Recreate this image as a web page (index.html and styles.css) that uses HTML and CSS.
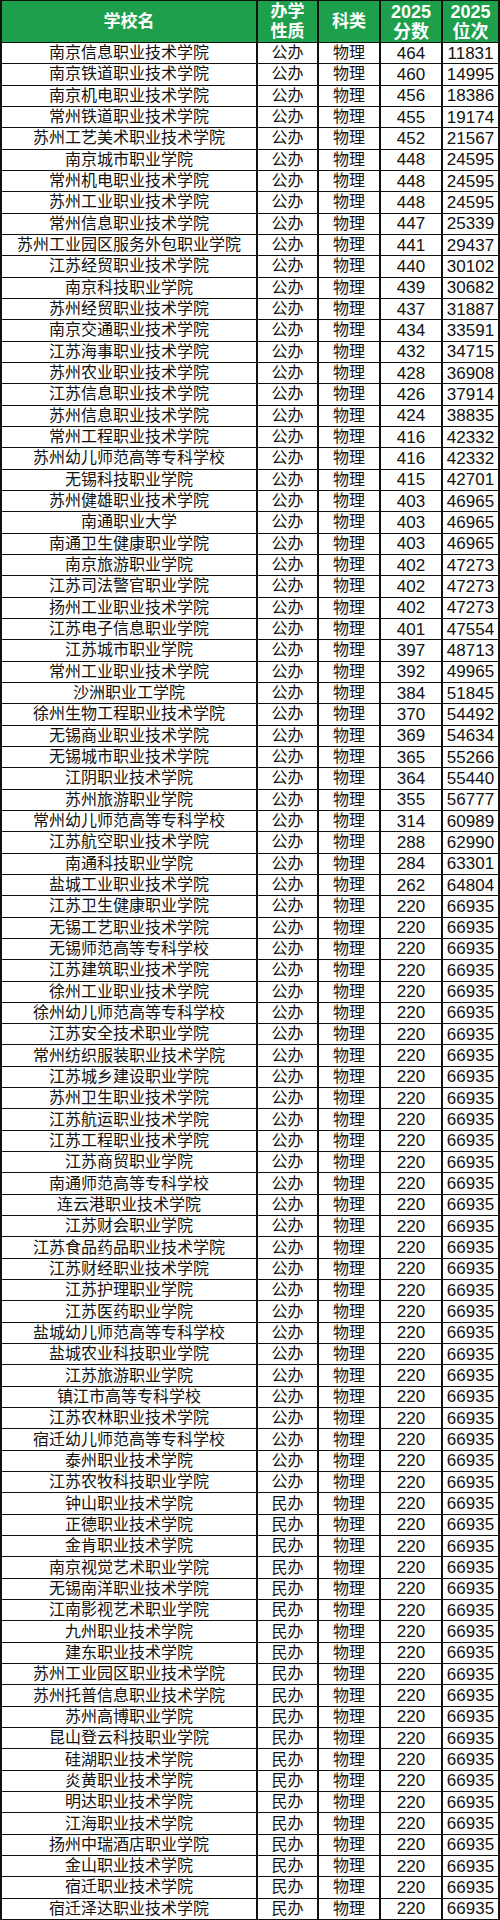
FILE: index.html
```html
<!DOCTYPE html>
<html lang="zh-CN">
<head>
<meta charset="utf-8">
<title>2025 江苏专科院校物理类分数位次</title>
<link rel="stylesheet" href="styles.css">
</head>
<body>
<div class="tbl">
<div class="h">学校名</div><div class="h">办学<br>性质</div><div class="h">科类</div><div class="h n">2025<br>分数</div><div class="h n">2025<br>位次</div>
<div>南京信息职业技术学院</div><div>公办</div><div>物理</div><div class="n">464</div><div class="n">11831</div>
<div>南京铁道职业技术学院</div><div>公办</div><div>物理</div><div class="n">460</div><div class="n">14995</div>
<div>南京机电职业技术学院</div><div>公办</div><div>物理</div><div class="n">456</div><div class="n">18386</div>
<div>常州铁道职业技术学院</div><div>公办</div><div>物理</div><div class="n">455</div><div class="n">19174</div>
<div>苏州工艺美术职业技术学院</div><div>公办</div><div>物理</div><div class="n">452</div><div class="n">21567</div>
<div>南京城市职业学院</div><div>公办</div><div>物理</div><div class="n">448</div><div class="n">24595</div>
<div>常州机电职业技术学院</div><div>公办</div><div>物理</div><div class="n">448</div><div class="n">24595</div>
<div>苏州工业职业技术学院</div><div>公办</div><div>物理</div><div class="n">448</div><div class="n">24595</div>
<div>常州信息职业技术学院</div><div>公办</div><div>物理</div><div class="n">447</div><div class="n">25339</div>
<div>苏州工业园区服务外包职业学院</div><div>公办</div><div>物理</div><div class="n">441</div><div class="n">29437</div>
<div>江苏经贸职业技术学院</div><div>公办</div><div>物理</div><div class="n">440</div><div class="n">30102</div>
<div>南京科技职业学院</div><div>公办</div><div>物理</div><div class="n">439</div><div class="n">30682</div>
<div>苏州经贸职业技术学院</div><div>公办</div><div>物理</div><div class="n">437</div><div class="n">31887</div>
<div>南京交通职业技术学院</div><div>公办</div><div>物理</div><div class="n">434</div><div class="n">33591</div>
<div>江苏海事职业技术学院</div><div>公办</div><div>物理</div><div class="n">432</div><div class="n">34715</div>
<div>苏州农业职业技术学院</div><div>公办</div><div>物理</div><div class="n">428</div><div class="n">36908</div>
<div>江苏信息职业技术学院</div><div>公办</div><div>物理</div><div class="n">426</div><div class="n">37914</div>
<div>苏州信息职业技术学院</div><div>公办</div><div>物理</div><div class="n">424</div><div class="n">38835</div>
<div>常州工程职业技术学院</div><div>公办</div><div>物理</div><div class="n">416</div><div class="n">42332</div>
<div>苏州幼儿师范高等专科学校</div><div>公办</div><div>物理</div><div class="n">416</div><div class="n">42332</div>
<div>无锡科技职业学院</div><div>公办</div><div>物理</div><div class="n">415</div><div class="n">42701</div>
<div>苏州健雄职业技术学院</div><div>公办</div><div>物理</div><div class="n">403</div><div class="n">46965</div>
<div>南通职业大学</div><div>公办</div><div>物理</div><div class="n">403</div><div class="n">46965</div>
<div>南通卫生健康职业学院</div><div>公办</div><div>物理</div><div class="n">403</div><div class="n">46965</div>
<div>南京旅游职业学院</div><div>公办</div><div>物理</div><div class="n">402</div><div class="n">47273</div>
<div>江苏司法警官职业学院</div><div>公办</div><div>物理</div><div class="n">402</div><div class="n">47273</div>
<div>扬州工业职业技术学院</div><div>公办</div><div>物理</div><div class="n">402</div><div class="n">47273</div>
<div>江苏电子信息职业学院</div><div>公办</div><div>物理</div><div class="n">401</div><div class="n">47554</div>
<div>江苏城市职业学院</div><div>公办</div><div>物理</div><div class="n">397</div><div class="n">48713</div>
<div>常州工业职业技术学院</div><div>公办</div><div>物理</div><div class="n">392</div><div class="n">49965</div>
<div>沙洲职业工学院</div><div>公办</div><div>物理</div><div class="n">384</div><div class="n">51845</div>
<div>徐州生物工程职业技术学院</div><div>公办</div><div>物理</div><div class="n">370</div><div class="n">54492</div>
<div>无锡商业职业技术学院</div><div>公办</div><div>物理</div><div class="n">369</div><div class="n">54634</div>
<div>无锡城市职业技术学院</div><div>公办</div><div>物理</div><div class="n">365</div><div class="n">55266</div>
<div>江阴职业技术学院</div><div>公办</div><div>物理</div><div class="n">364</div><div class="n">55440</div>
<div>苏州旅游职业学院</div><div>公办</div><div>物理</div><div class="n">355</div><div class="n">56777</div>
<div>常州幼儿师范高等专科学校</div><div>公办</div><div>物理</div><div class="n">314</div><div class="n">60989</div>
<div>江苏航空职业技术学院</div><div>公办</div><div>物理</div><div class="n">288</div><div class="n">62990</div>
<div>南通科技职业学院</div><div>公办</div><div>物理</div><div class="n">284</div><div class="n">63301</div>
<div>盐城工业职业技术学院</div><div>公办</div><div>物理</div><div class="n">262</div><div class="n">64804</div>
<div>江苏卫生健康职业学院</div><div>公办</div><div>物理</div><div class="n">220</div><div class="n">66935</div>
<div>无锡工艺职业技术学院</div><div>公办</div><div>物理</div><div class="n">220</div><div class="n">66935</div>
<div>无锡师范高等专科学校</div><div>公办</div><div>物理</div><div class="n">220</div><div class="n">66935</div>
<div>江苏建筑职业技术学院</div><div>公办</div><div>物理</div><div class="n">220</div><div class="n">66935</div>
<div>徐州工业职业技术学院</div><div>公办</div><div>物理</div><div class="n">220</div><div class="n">66935</div>
<div>徐州幼儿师范高等专科学校</div><div>公办</div><div>物理</div><div class="n">220</div><div class="n">66935</div>
<div>江苏安全技术职业学院</div><div>公办</div><div>物理</div><div class="n">220</div><div class="n">66935</div>
<div>常州纺织服装职业技术学院</div><div>公办</div><div>物理</div><div class="n">220</div><div class="n">66935</div>
<div>江苏城乡建设职业学院</div><div>公办</div><div>物理</div><div class="n">220</div><div class="n">66935</div>
<div>苏州卫生职业技术学院</div><div>公办</div><div>物理</div><div class="n">220</div><div class="n">66935</div>
<div>江苏航运职业技术学院</div><div>公办</div><div>物理</div><div class="n">220</div><div class="n">66935</div>
<div>江苏工程职业技术学院</div><div>公办</div><div>物理</div><div class="n">220</div><div class="n">66935</div>
<div>江苏商贸职业学院</div><div>公办</div><div>物理</div><div class="n">220</div><div class="n">66935</div>
<div>南通师范高等专科学校</div><div>公办</div><div>物理</div><div class="n">220</div><div class="n">66935</div>
<div>连云港职业技术学院</div><div>公办</div><div>物理</div><div class="n">220</div><div class="n">66935</div>
<div>江苏财会职业学院</div><div>公办</div><div>物理</div><div class="n">220</div><div class="n">66935</div>
<div>江苏食品药品职业技术学院</div><div>公办</div><div>物理</div><div class="n">220</div><div class="n">66935</div>
<div>江苏财经职业技术学院</div><div>公办</div><div>物理</div><div class="n">220</div><div class="n">66935</div>
<div>江苏护理职业学院</div><div>公办</div><div>物理</div><div class="n">220</div><div class="n">66935</div>
<div>江苏医药职业学院</div><div>公办</div><div>物理</div><div class="n">220</div><div class="n">66935</div>
<div>盐城幼儿师范高等专科学校</div><div>公办</div><div>物理</div><div class="n">220</div><div class="n">66935</div>
<div>盐城农业科技职业学院</div><div>公办</div><div>物理</div><div class="n">220</div><div class="n">66935</div>
<div>江苏旅游职业学院</div><div>公办</div><div>物理</div><div class="n">220</div><div class="n">66935</div>
<div>镇江市高等专科学校</div><div>公办</div><div>物理</div><div class="n">220</div><div class="n">66935</div>
<div>江苏农林职业技术学院</div><div>公办</div><div>物理</div><div class="n">220</div><div class="n">66935</div>
<div>宿迁幼儿师范高等专科学校</div><div>公办</div><div>物理</div><div class="n">220</div><div class="n">66935</div>
<div>泰州职业技术学院</div><div>公办</div><div>物理</div><div class="n">220</div><div class="n">66935</div>
<div>江苏农牧科技职业学院</div><div>公办</div><div>物理</div><div class="n">220</div><div class="n">66935</div>
<div>钟山职业技术学院</div><div>民办</div><div>物理</div><div class="n">220</div><div class="n">66935</div>
<div>正德职业技术学院</div><div>民办</div><div>物理</div><div class="n">220</div><div class="n">66935</div>
<div>金肯职业技术学院</div><div>民办</div><div>物理</div><div class="n">220</div><div class="n">66935</div>
<div>南京视觉艺术职业学院</div><div>民办</div><div>物理</div><div class="n">220</div><div class="n">66935</div>
<div>无锡南洋职业技术学院</div><div>民办</div><div>物理</div><div class="n">220</div><div class="n">66935</div>
<div>江南影视艺术职业学院</div><div>民办</div><div>物理</div><div class="n">220</div><div class="n">66935</div>
<div>九州职业技术学院</div><div>民办</div><div>物理</div><div class="n">220</div><div class="n">66935</div>
<div>建东职业技术学院</div><div>民办</div><div>物理</div><div class="n">220</div><div class="n">66935</div>
<div>苏州工业园区职业技术学院</div><div>民办</div><div>物理</div><div class="n">220</div><div class="n">66935</div>
<div>苏州托普信息职业技术学院</div><div>民办</div><div>物理</div><div class="n">220</div><div class="n">66935</div>
<div>苏州高博职业学院</div><div>民办</div><div>物理</div><div class="n">220</div><div class="n">66935</div>
<div>昆山登云科技职业学院</div><div>民办</div><div>物理</div><div class="n">220</div><div class="n">66935</div>
<div>硅湖职业技术学院</div><div>民办</div><div>物理</div><div class="n">220</div><div class="n">66935</div>
<div>炎黄职业技术学院</div><div>民办</div><div>物理</div><div class="n">220</div><div class="n">66935</div>
<div>明达职业技术学院</div><div>民办</div><div>物理</div><div class="n">220</div><div class="n">66935</div>
<div>江海职业技术学院</div><div>民办</div><div>物理</div><div class="n">220</div><div class="n">66935</div>
<div>扬州中瑞酒店职业学院</div><div>民办</div><div>物理</div><div class="n">220</div><div class="n">66935</div>
<div>金山职业技术学院</div><div>民办</div><div>物理</div><div class="n">220</div><div class="n">66935</div>
<div>宿迁职业技术学院</div><div>民办</div><div>物理</div><div class="n">220</div><div class="n">66935</div>
<div>宿迁泽达职业技术学院</div><div>民办</div><div>物理</div><div class="n">220</div><div class="n">66935</div>
</div>
</body>
</html>
```
FILE: styles.css
```css
html, body {
  margin: 0;
  padding: 0;
  background: #fff;
}

.tbl {
  width: 500px;
  height: 1920px;
  box-sizing: border-box;
  display: grid;
  grid-template-columns: 254px 59px 60px 60px 55px;
  grid-template-rows: 41px repeat(88, 1fr);
  column-gap: 2px;
  row-gap: 1px;
  padding: 1px 2px;
  background: #111;
  font-family: "Liberation Sans", "Noto Sans CJK SC", sans-serif;
  color: #111;
}

.tbl > div {
  background: #fff;
  display: flex;
  align-items: center;
  justify-content: center;
  text-align: center;
  font-size: 16px;
  line-height: 1;
  white-space: nowrap;
  overflow: hidden;
}

.tbl > .n {
  font-size: 17px;
}

.tbl > .h {
  background: #1e9f4b;
  color: #fff;
  font-weight: bold;
  font-size: 17px;
  line-height: 20px;
}

.tbl > .h.n {
  font-size: 18px;
}
```
